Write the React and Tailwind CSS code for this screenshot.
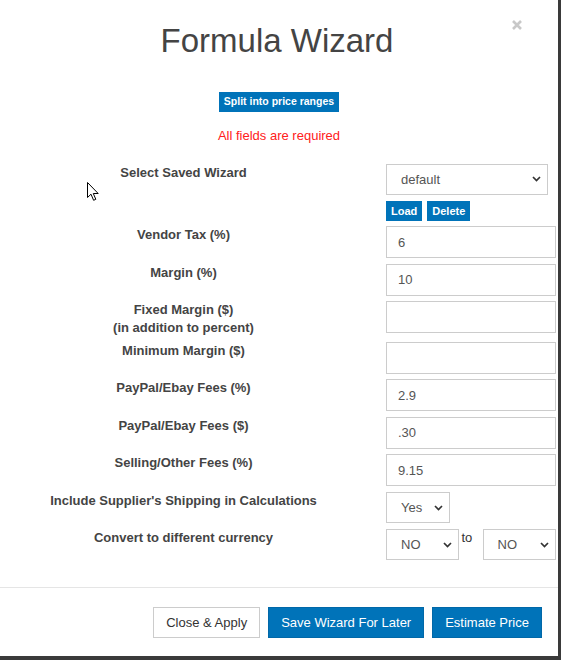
import React from 'react';

const labelCls =
  'w-[337px] shrink-0 text-center text-[13px] font-bold leading-[17.5px] text-[#444]';
const inputCls =
  'block w-[170px] h-[32px] border border-[#ccc] bg-white pl-[11px] text-[13px] text-[#555] outline-none';

const Chevron = () => (
  <svg
    className="pointer-events-none absolute right-[7px] top-1/2 -translate-y-1/2"
    width="9"
    height="6"
    viewBox="0 0 9 6"
    fill="none"
  >
    <path d="M1 1l3.5 3.5L8 1" stroke="#333" strokeWidth="1.7" />
  </svg>
);

const Select = ({ value, options, width }) => (
  <div className={`relative ${width} h-[31.5px]`}>
    <select
      defaultValue={value}
      className="block w-full h-full appearance-none border border-[#ccc] bg-white pl-[14px] text-[13px] text-[#555] outline-none"
    >
      {options.map((o) => (
        <option key={o}>{o}</option>
      ))}
    </select>
    <Chevron />
  </div>
);

const Row = ({ label, children, last }) => (
  <div className={`flex items-start pl-[15px] ${last ? '' : 'mb-[5.5px]'}`}>
    <div className={labelCls}>{label}</div>
    <div className="ml-[34px] w-[170px]">{children}</div>
  </div>
);

const Field = ({ label, value }) => (
  <Row label={label}>
    <input readOnly defaultValue={value} className={inputCls} />
  </Row>
);

export default function App() {
  return (
    <div className="w-[561px] h-[660px] bg-[#3a3a3a] font-['Liberation_Sans',Arial,sans-serif]">
      <div className="relative w-[558px] h-[656px] bg-white flex flex-col">
        {/* close */}
        <button className="absolute left-[512px] top-[20px] w-[10px] h-[10px]">
          <svg width="10" height="10" viewBox="0 0 10 10">
            <path d="M1 1l8 8M9 1l-8 8" stroke="#c8c8c8" strokeWidth="2.6" />
          </svg>
        </button>

        {/* cursor */}
        <svg
          className="absolute left-[86.5px] top-[182px]"
          width="13"
          height="20"
          viewBox="0 0 13 20"
        >
          <path
            d="M0.5 0.5V15.5L4 12.2L6.6 18.3L8.8 17.3L6.3 11.5H11.2Z"
            fill="#fff"
            stroke="#000"
            strokeWidth="1"
            strokeLinejoin="miter"
          />
        </svg>

        {/* Header */}
        <div className="flex flex-col items-center pt-[20.5px]">
          <h1 className="text-[33px] leading-[40px] font-normal text-[#444] pr-[4px]">
            Formula Wizard
          </h1>
          <button className="mt-[31.5px] h-[20px] px-[5px] bg-[#0073b9] text-white text-[10.5px] font-bold">
            Split into price ranges
          </button>
          <p className="mt-[14.7px] text-[13px] leading-[18px] text-[#ff2020]">
            All fields are required
          </p>
        </div>

        {/* Form */}
        <div className="flex-1 mt-[19px]">
          <div className="flex items-start pl-[15px] mb-[5px]">
            <div className={labelCls}>Select Saved Wizard</div>
            <div className="ml-[34px] w-[170px]">
              <Select value="default" options={['default']} width="w-[162px]" />
              <div className="flex gap-[5px] mt-[6.3px]">
                <button className="h-[20px] px-[5px] bg-[#0073b9] text-white text-[11px] font-bold">
                  Load
                </button>
                <button className="h-[20px] px-[5px] bg-[#0073b9] text-white text-[11px] font-bold">
                  Delete
                </button>
              </div>
            </div>
          </div>

          <Field label="Vendor Tax (%)" value="6" />
          <Field label="Margin (%)" value="10" />
          <Field
            label={
              <>
                Fixed Margin ($)
                <br />
                (in addition to percent)
              </>
            }
            value=""
          />
          <Field label="Minimum Margin ($)" value="" />
          <Field label="PayPal/Ebay Fees (%)" value="2.9" />
          <Field label="PayPal/Ebay Fees ($)" value=".30" />
          <Field label="Selling/Other Fees (%)" value="9.15" />

          <Row label="Include Supplier's Shipping in Calculations">
            <Select value="Yes" options={['Yes', 'No']} width="w-[63.5px]" />
          </Row>

          <Row label="Convert to different currency" last>
            <div className="flex items-start">
              <Select value="NO" options={['NO', 'USD', 'EUR']} width="w-[72.5px]" />
              <span className="ml-[3px] text-[13px] leading-[17.5px] text-[#333]">to</span>
              <div className="ml-auto">
                <Select value="NO" options={['NO', 'USD', 'EUR']} width="w-[73.5px]" />
              </div>
            </div>
          </Row>
        </div>

        {/* Footer */}
        <div className="flex justify-end gap-[8px] border-t border-[#e5e5e5] pt-[18.3px] pb-[18px] pr-[16px]">
          <button className="h-[31.5px] px-[12px] border border-[#ccc] bg-white text-[13px] text-[#333]">
            Close &amp; Apply
          </button>
          <button className="h-[31.5px] px-[12px] border border-[#0168a8] bg-[#0073b9] text-[13px] text-white">
            Save Wizard For Later
          </button>
          <button className="h-[31.5px] px-[12px] border border-[#0168a8] bg-[#0073b9] text-[13px] text-white">
            Estimate Price
          </button>
        </div>
      </div>
    </div>
  );
}
